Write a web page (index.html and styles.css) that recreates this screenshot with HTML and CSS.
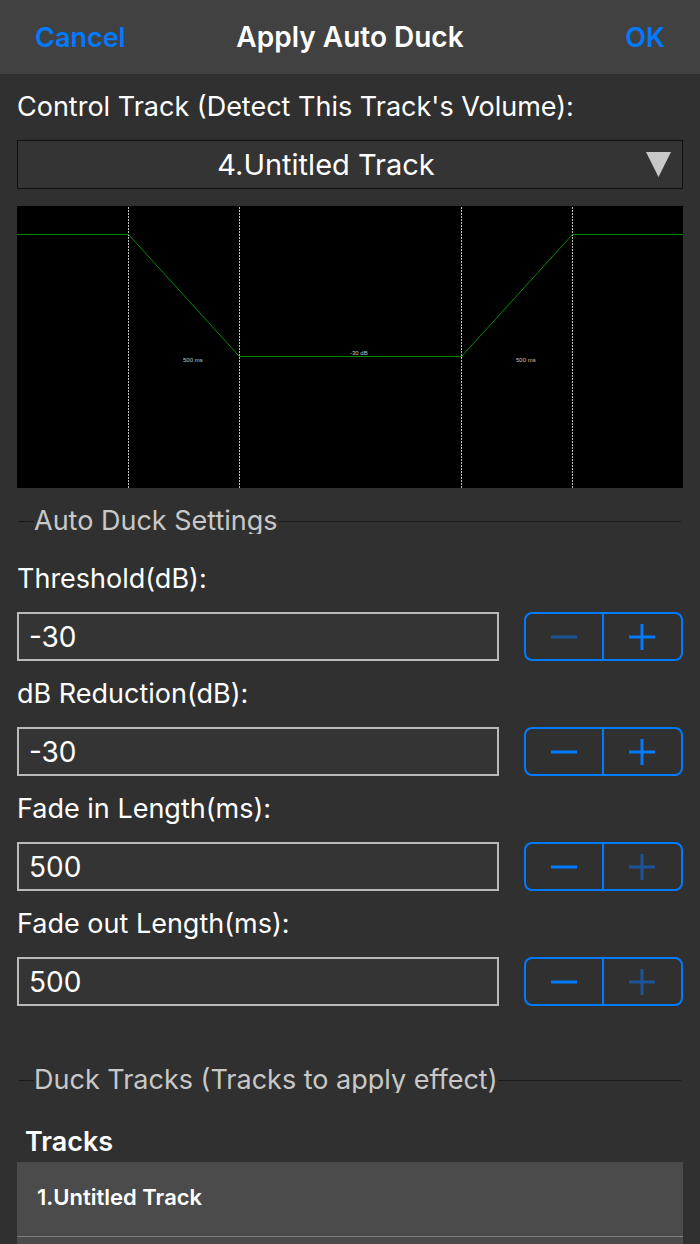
FILE: index.html
```
<!DOCTYPE html>
<html lang="en">
<head>
  <meta charset="UTF-8">
  <meta name="viewport" content="width=device-width, initial-scale=1.0">
  <title>Apply Auto Duck</title>
  <link rel="stylesheet" href="styles.css">
</head>
<body>
  <header class="navbar">
    <button type="button" class="nav-btn">Cancel</button>
    <h1>Apply Auto Duck</h1>
    <button type="button" class="nav-btn nav-ok">OK</button>
  </header>

  <main class="content">
    <label class="control-label" for="controlTrack">Control Track (Detect This Track's Volume):</label>
    <div class="select-box">
      <select id="controlTrack">
        <option>4.Untitled Track</option>
      </select>
      <svg class="select-arrow" viewBox="0 0 25 25" aria-hidden="true"><path d="M0 0h25L12.500 25z"/></svg>
    </div>

    <svg class="graph" viewBox="0 0 666 282" role="img" aria-label="Duck envelope">
      <g class="guides">
        <path d="M111.500 1V282"/>
        <path d="M222.500 1V282"/>
        <path d="M444.500 1V282"/>
        <path d="M555.500 1V282"/>
      </g>
      <path class="envelope" d="M0 28.500H111.500L222.500 150.500H444.500L555.500 28.500H666"/>
      <text x="166" y="156">500 ms</text>
      <text x="333" y="149">-30 dB</text>
      <text x="499" y="156">500 ms</text>
    </svg>

    <h2 class="section-title">Auto Duck Settings</h2>

    <label class="field-label" for="threshold">Threshold(dB):</label>
    <div class="field-row">
      <input type="text" id="threshold" value="-30">
      <div class="stepper">
        <button type="button" aria-label="Decrease threshold" disabled><svg viewBox="0 0 26 26"><path d="M0 13h26"/></svg></button>
        <button type="button" aria-label="Increase threshold"><svg viewBox="0 0 26 26"><path d="M0 13h26M13 0v26"/></svg></button>
      </div>
    </div>

    <label class="field-label" for="reduction">dB Reduction(dB):</label>
    <div class="field-row">
      <input type="text" id="reduction" value="-30">
      <div class="stepper">
        <button type="button" aria-label="Decrease reduction"><svg viewBox="0 0 26 26"><path d="M0 13h26"/></svg></button>
        <button type="button" aria-label="Increase reduction"><svg viewBox="0 0 26 26"><path d="M0 13h26M13 0v26"/></svg></button>
      </div>
    </div>

    <label class="field-label" for="fadeIn">Fade in Length(ms):</label>
    <div class="field-row">
      <input type="text" id="fadeIn" value="500">
      <div class="stepper">
        <button type="button" aria-label="Decrease fade in"><svg viewBox="0 0 26 26"><path d="M0 13h26"/></svg></button>
        <button type="button" aria-label="Increase fade in" disabled><svg viewBox="0 0 26 26"><path d="M0 13h26M13 0v26"/></svg></button>
      </div>
    </div>

    <label class="field-label" for="fadeOut">Fade out Length(ms):</label>
    <div class="field-row">
      <input type="text" id="fadeOut" value="500">
      <div class="stepper">
        <button type="button" aria-label="Decrease fade out"><svg viewBox="0 0 26 26"><path d="M0 13h26"/></svg></button>
        <button type="button" aria-label="Increase fade out" disabled><svg viewBox="0 0 26 26"><path d="M0 13h26M13 0v26"/></svg></button>
      </div>
    </div>

    <h2 class="section-title section-tracks">Duck Tracks (Tracks to apply effect)</h2>

    <h3 class="list-title">Tracks</h3>
    <ul class="track-list">
      <li>1.Untitled Track</li>
    </ul>
  </main>
</body>
</html>
```

FILE: styles.css
```
:root {
  --bg-color: #303030;
  --bar-color: #414141;
  --field-bg: #343434;
  --list-bg: #4b4b4b;
  --accent: #007aff;
  --accent-off: #1a5598;
  --text-color: #fff;
  --text-secondary: #c8c8c8;
  --field-border: #bababa;
}

* {
  box-sizing: border-box;
}

body {
  display: flex;
  flex-direction: column;
  min-height: 100vh;
  margin: 0;
  background-color: var(--bg-color);
  color: var(--text-color);
  font-family: Inter, sans-serif;
  font-size: 27px;
}

button,
input,
select {
  font: inherit;
}

.navbar {
  display: grid;
  grid-template-columns: 1fr auto 1fr;
  align-items: center;
  height: 74px;
  padding: 0 35px;
  background-color: var(--bar-color);
}

.navbar h1 {
  margin: 0;
  font-size: 28px;
  font-weight: 600;
}

.nav-btn {
  justify-self: start;
  padding: 0;
  border: none;
  background: none;
  color: var(--accent);
  font-weight: 600;
  cursor: pointer;
}

.nav-ok {
  justify-self: end;
}

.content {
  display: flex;
  flex-direction: column;
  flex: 1;
  padding: 0 17px;
}

.control-label,
.field-label {
  line-height: 66px;
}

.select-box {
  display: grid;
  align-items: center;
  margin-bottom: 17px;
}

.select-box select,
.select-arrow {
  grid-area: 1 / 1;
}

.select-box select {
  width: 100%;
  height: 49px;
  padding: 0 48px 0 0;
  border: 1px solid #101010;
  border-radius: 0;
  background-color: var(--field-bg);
  color: var(--text-color);
  font-size: 29px;
  text-align: center;
  text-align-last: center;
  appearance: none;
}

.select-arrow {
  justify-self: end;
  width: 25px;
  height: 25px;
  margin-right: 12px;
  fill: var(--text-secondary);
  pointer-events: none;
}

.graph {
  display: block;
  width: 100%;
  background-color: #000;
}

.graph path {
  fill: none;
  stroke-width: 1;
}

.guides {
  stroke: #c0c0c0;
  stroke-dasharray: 2 1;
}

.envelope {
  stroke: #008c00;
}

.graph text {
  fill: #c8c8c8;
  font-family: "Liberation Sans", sans-serif;
  font-size: 6px;
}

/* the tight line box cuts the descenders */
.section-title {
  display: flex;
  align-items: center;
  margin: 20px 2px 12px;
  color: var(--text-secondary);
  font-size: 27px;
  font-weight: 400;
  line-height: 26px;
  overflow: hidden;
}

.section-title::before,
.section-title::after {
  content: "";
  height: 1px;
  background-color: #1a1a1a;
}

.section-title::before {
  width: 15px;
}

.section-title::after {
  flex: 1;
}

.section-tracks {
  margin: 61px 2px 29px;
}

.field-row {
  display: grid;
  grid-template-columns: 1fr 159px;
  gap: 25px;
}

.field-row input {
  width: 100%;
  height: 49px;
  padding: 0 10px;
  border: 2px solid var(--field-border);
  border-radius: 0;
  background-color: var(--field-bg);
  color: var(--text-color);
  font-size: 28px;
  outline: none;
}

.stepper {
  display: grid;
  grid-template-columns: 1fr 1fr;
  border: 2px solid var(--accent);
  border-radius: 8px;
}

.stepper button {
  display: flex;
  align-items: center;
  justify-content: center;
  padding: 0;
  border: none;
  background: none;
  color: var(--accent);
  cursor: pointer;
}

.stepper button:first-child {
  border-right: 2px solid var(--accent);
}

.stepper button:disabled {
  color: var(--accent-off);
  cursor: default;
}

.stepper svg {
  width: 26px;
  height: 26px;
  fill: none;
  stroke: currentColor;
  stroke-width: 3;
}

.list-title {
  margin: 0 8px;
  font-size: 27px;
  font-weight: 600;
  line-height: 40px;
}

.track-list {
  flex: 1;
  margin: 0;
  padding: 0;
  background-color: var(--list-bg);
  list-style: none;
}

.track-list li {
  padding: 17px 20px 21px;
  border-bottom: 1px solid #7d7d7d;
  font-size: 22px;
  font-weight: 600;
  line-height: 36px;
}
```
